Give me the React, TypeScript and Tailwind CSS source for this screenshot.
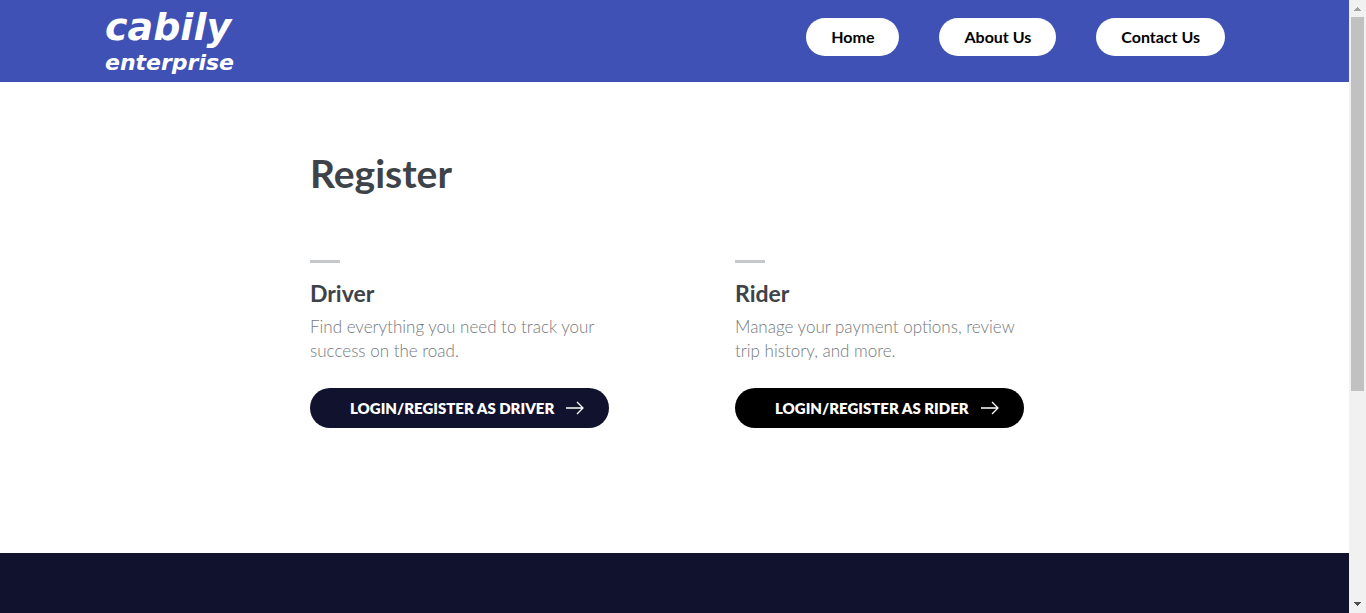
import { ReactNode } from "react";

function NavPill({ href, children }: { href: string; children: ReactNode }) {
  return (
    <a
      href={href}
      className="flex h-[38px] items-center rounded-full bg-white px-[25px] text-[16px] leading-5 font-bold whitespace-nowrap text-black"
    >
      {children}
    </a>
  );
}

function Arrow() {
  return (
    <svg
      width="18"
      height="14"
      viewBox="0 0 18 14"
      fill="none"
      stroke="currentColor"
      strokeWidth="1.3"
      aria-hidden="true"
    >
      <path d="M0 7h17M11 1l6 6-6 6" />
    </svg>
  );
}

type OptionProps = {
  title: string;
  text: string;
  action: string;
  tone: string;
};

function Option({ title, text, action, tone }: OptionProps) {
  return (
    <section className="flex flex-col items-start">
      <span className="h-[3px] w-[30px] bg-[#c4c8cb]" />
      <h2 className="mt-[15px] text-[23px] leading-[30px] font-bold text-[#3e4249]">{title}</h2>
      <p className="mt-[7px] text-[17px] leading-6 font-light text-[#75797e]">{text}</p>
      <a
        href="#login"
        className={`mt-[25px] flex h-10 items-center gap-3 rounded-full pr-[25px] pl-10 text-[15px] leading-5 font-extrabold whitespace-nowrap text-white ${tone}`}
      >
        {action}
        <Arrow />
      </a>
    </section>
  );
}

function ScrollTrack() {
  return (
    <div
      aria-hidden="true"
      className="sticky top-0 flex h-screen w-[17px] shrink-0 flex-col items-center bg-[#f1f1f1]"
    >
      <svg width="17" height="17" viewBox="0 0 17 17" fill="#a3a3a3">
        <path d="M8 7h1v1h1v1h1v1h1v1H5v-1h1V9h1V8h1z" />
      </svg>
      <div className="h-[374px] w-[13px] bg-[#c1c1c1]" />
      <svg className="mt-auto" width="17" height="17" viewBox="0 0 17 17" fill="#505050">
        <path d="M5 6h7v1h-1v1h-1v1H9v1H8V9H7V8H6V7H5z" />
      </svg>
    </div>
  );
}

export default function App() {
  return (
    <div className="flex min-h-screen bg-white font-['Lato','Open_Sans',sans-serif]">
      <div className="flex min-w-0 flex-1 flex-col">
        <header className="flex h-[82px] items-start justify-between bg-[#3f51b5] pr-[124px] pl-[105px]">
          <a
            href="#home"
            className="flex flex-col pt-1 font-['DejaVu_Sans',sans-serif] font-bold text-white italic"
          >
            <span className="text-[38px] leading-[46px]">cabily</span>
            <span className="text-[22px] leading-[26px]">enterprise</span>
          </a>
          <nav className="flex gap-10 pt-[18px]">
            <NavPill href="#home">Home</NavPill>
            <NavPill href="#about">About Us</NavPill>
            <NavPill href="#contact">Contact Us</NavPill>
          </nav>
        </header>
        <main className="mx-auto w-full max-w-[729px] pt-[67px] pb-[125px]">
          <h1 className="text-[39px] leading-[48px] font-bold text-[#3e4249]">Register</h1>
          <div className="mt-[63px] grid grid-cols-2 gap-[121px]">
            <Option
              title="Driver"
              text="Find everything you need to track your success on the road."
              action="LOGIN/REGISTER AS DRIVER"
              tone="bg-[#11122d]"
            />
            <Option
              title="Rider"
              text="Manage your payment options, review trip history, and more."
              action="LOGIN/REGISTER AS RIDER"
              tone="bg-black"
            />
          </div>
        </main>
        <footer className="min-h-[60px] flex-1 bg-[#11122d]" />
      </div>
      <ScrollTrack />
    </div>
  );
}
